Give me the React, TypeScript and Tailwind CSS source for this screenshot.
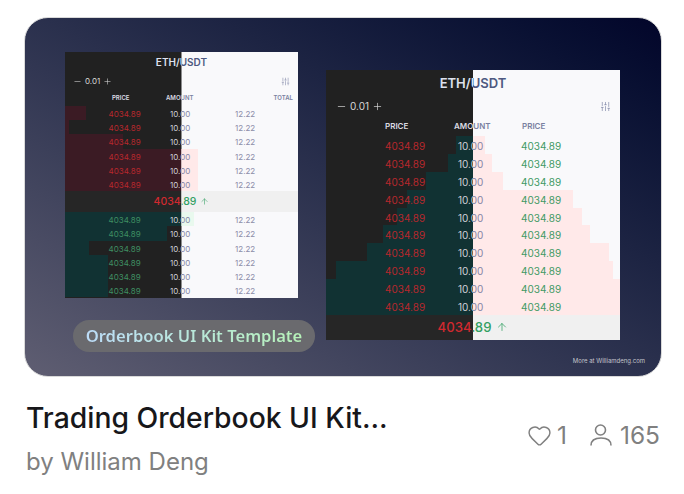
import { ArrowUp, Heart, Minus, Plus, SlidersVertical } from "lucide-react";

interface Bar {
  from: number;
  to: number;
  red: boolean;
}

interface BookSpec {
  big: boolean;
  third: string;
  thirdHead: string;
  // bar edges in px from the left edge of the book, one per row
  bars: { dark: Bar[]; light: Bar[] };
}

const smallBars: Bar[] = [
  { from: 0, to: 21, red: true },
  { from: 0, to: 4, red: true },
  { from: 0, to: 58, red: true },
  { from: 0, to: 133, red: true },
  { from: 0, to: 133, red: true },
  { from: 0, to: 133, red: true },
  { from: 0, to: 129, red: false },
  { from: 0, to: 102, red: false },
  { from: 0, to: 24, red: false },
  { from: 0, to: 43, red: false },
  { from: 0, to: 43, red: false },
  { from: 0, to: 43, red: false },
];

const small: BookSpec = {
  big: false,
  third: "12.22",
  thirdHead: "TOTAL",
  bars: { dark: smallBars, light: smallBars },
};

const darkLefts = [130, 122, 100, 81, 71, 57, 41, 10, 0, 0];
const lightRights = [159, 166, 177, 247, 256, 264, 283, 287, 294, 294];

const large: BookSpec = {
  big: true,
  third: "4034.89",
  thirdHead: "PRICE",
  bars: {
    dark: darkLefts.map((from) => ({ from, to: 147, red: false })),
    light: lightRights.map((to) => ({ from: 147, to, red: true })),
  },
};

function Book({ spec, dark }: { spec: BookSpec; dark: boolean }) {
  const { big } = spec;
  const rows = dark ? spec.bars.dark : spec.bars.light;
  const half = rows.length / 2;

  return (
    <div
      className={`flex h-full w-full flex-col ${dark ? "bg-[#212121]" : "bg-[#f9f9fb]"}`}
    >
      <div
        className={`text-center font-semibold ${big ? "pt-[4px] text-[13px] leading-[18px]" : "pt-[3px] text-[10px] leading-[14px]"} ${dark ? "text-[#dde1ee]" : "text-[#4d5880]"}`}
      >
        ETH/USDT
      </div>
      <div
        className={`flex items-center justify-between ${big ? "mt-[5px] h-[18px] pl-[10px] pr-[9px] text-[10px]" : "mt-[5px] h-[14px] pl-[8px] pr-[8px] text-[8px]"} ${dark ? "text-[#d8d8d8]" : "text-[#8088a8]"}`}
      >
        <div className="flex items-center gap-[3px]">
          <Minus size={big ? 11 : 9} strokeWidth={1.5} />
          <span>0.01</span>
          <Plus size={big ? 11 : 9} strokeWidth={1.5} />
        </div>
        <SlidersVertical size={big ? 11 : 9} strokeWidth={1.5} />
      </div>
      <div
        className={`flex font-semibold ${big ? "mt-[2px] h-[18px] pl-[59px] text-[8px] leading-[18px]" : "mt-[3px] h-[14px] pl-[47px] text-[6px] leading-[14px]"} ${dark ? "text-[#dcdce4]" : "text-[#7a80a0]"}`}
      >
        <span className={big ? "w-[69px]" : "w-[54px]"}>PRICE</span>
        <span className={big ? "w-[68px]" : "grow"}>AMOUNT</span>
        <span className={big ? "" : "pr-[5px]"}>{spec.thirdHead}</span>
      </div>
      <div className="mt-[1px]">
        {rows.slice(0, big ? rows.length : half).map((bar, i) => (
          <Row key={i} spec={spec} dark={dark} bar={bar} />
        ))}
      </div>
      <div
        className={`flex items-center justify-center font-medium ${big ? "h-[25px] gap-[5px] text-[13.2px]" : "h-[21px] gap-[4px] text-[10.5px]"} ${dark ? "bg-[#262626]" : "bg-[#f0f0f0]"}`}
      >
        <span className={dark ? "text-[#d0292f]" : "text-[#33a063]"}>4034.89</span>
        <ArrowUp
          size={big ? 12 : 9}
          strokeWidth={1.5}
          className="text-[#33a063]"
        />
      </div>
      {!big &&
        rows.slice(half).map((bar, i) => (
          <Row key={i} spec={spec} dark={dark} bar={bar} />
        ))}
    </div>
  );
}

function Row({ spec, dark, bar }: { spec: BookSpec; dark: boolean; bar: Bar }) {
  const { big } = spec;
  const barColor = bar.red
    ? dark
      ? "bg-[#3b1b24]"
      : "bg-[#ffe9e9]"
    : dark
      ? "bg-[#113233]"
      : "bg-[#e9f9ee]";
  // the big book has red prices in the first column whatever its bar colour
  const priceRed = big || bar.red;
  const priceColor = priceRed
    ? "text-[#b8282d]"
    : dark
      ? "text-[#3f8f62]"
      : "text-[#3f9a64]";

  return (
    <div
      className={`relative flex ${big ? "h-[17.9px] pl-[59px] text-[10px] leading-[20px]" : "h-[14.2px] pl-[43.5px] text-[8px] leading-[16px]"}`}
    >
      <div
        className={`absolute inset-y-0 ${barColor}`}
        style={{ left: bar.from, width: bar.to - bar.from }}
      />
      <span
        className={`relative ${big ? "w-[73px]" : "w-[61.5px]"} ${priceColor}`}
      >
        4034.89
      </span>
      <span
        className={`relative ${big ? "w-[63px]" : "w-[65px]"} ${dark ? "text-[#d0d0d8]" : "text-[#8684a4]"}`}
      >
        10.00
      </span>
      <span className={`relative ${big ? "text-[#3f9a64]" : "text-[#8c8ca8]"}`}>
        {spec.third}
      </span>
    </div>
  );
}

function SplitBook({ spec, className }: { spec: BookSpec; className: string }) {
  return (
    <div className={`relative shrink-0 overflow-hidden ${className}`}>
      <Book spec={spec} dark={true} />
      <div className="absolute inset-0 [clip-path:inset(0_0_0_50%)]">
        <Book spec={spec} dark={false} />
      </div>
    </div>
  );
}

export default function App() {
  return (
    <div
      className="h-[494px] w-[684px] overflow-hidden bg-white px-[24px] pt-[17px]"
      style={{ fontFamily: "Inter, sans-serif" }}
    >
      <div className="relative flex h-[360px] w-[638px] items-start overflow-hidden rounded-[24px] border border-[#d9d9d9] bg-linear-to-bl from-[#03062a] to-[#5f5e72]">
        <div className="ml-[40px] mt-[34px] flex w-[260px] shrink-0 flex-col items-start">
          <SplitBook spec={small} className="h-[246px] w-[233px]" />
          <div
            className="ml-[8px] mt-[22px] flex h-[32px] w-[242px] items-center justify-center rounded-full bg-[#6a6a6e] text-[16.6px] font-semibold"
            style={{ fontFamily: "'Noto Sans', sans-serif" }}
          >
            <span className="bg-linear-to-r from-[#bcdcf8] to-[#b6f2b8] bg-clip-text text-transparent">
              Orderbook UI Kit Template
            </span>
          </div>
        </div>
        <SplitBook spec={large} className="ml-[1px] mt-[52px] h-[270px] w-[294px]" />
        <div className="absolute bottom-[11px] right-[16px] text-[6px] leading-[8px] text-[#c4c4cc]">
          More at Williamdeng.com
        </div>
      </div>
      <div className="flex items-center justify-between pl-[2px] pt-[25px]">
        <div>
          <div className="text-[28.3px] font-medium leading-[32px] text-[#17171a]">
            Trading Orderbook UI Kit...
          </div>
          <div className="mt-[14px] text-[24px] leading-[28px] text-[#808080]">
            by William Deng
          </div>
        </div>
        <div className="mb-[8px] flex items-center text-[24.5px] leading-[30px] text-[#808080]">
          <Heart size={25} strokeWidth={1.4} />
          <span className="ml-[5px]">1</span>
          <svg
            width="22"
            height="22"
            viewBox="0 0 22 22"
            fill="none"
            stroke="currentColor"
            strokeWidth="1.6"
            className="ml-[23px]"
          >
            <circle cx="10.5" cy="6" r="5" />
            <path d="M1 21.5C1 16.5 5 14 11 14C17 14 21 16.5 21 21.5" />
          </svg>
          <span className="ml-[8px]">165</span>
        </div>
      </div>
    </div>
  );
}
